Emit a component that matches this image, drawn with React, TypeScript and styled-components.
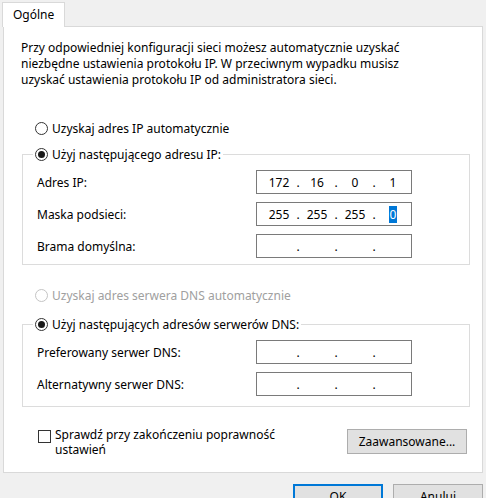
import styled, { createGlobalStyle } from "styled-components";

const GlobalStyle = createGlobalStyle`
  html, body {
    margin: 0;
    padding: 0;
    background: #f0f0f0;
  }
  body {
    font-family: "Noto Sans", "Open Sans", Arial, sans-serif;
    font-size: 12px;
    color: #000;
  }
`;

const Window = styled.div`
  width: 486px;
  height: 498px;
  overflow: hidden;
  background: #f0f0f0;
  padding-top: 2px;
  box-sizing: border-box;
`;

const TabStrip = styled.div`
  display: flex;
  padding-left: 2px;
`;

const Tab = styled.div`
  width: 63px;
  height: 25px;
  box-sizing: border-box;
  padding: 3px 0 0 10px;
  background: #fff;
  border: 1px solid #d9d9d9;
  border-bottom: none;
  position: relative;
  z-index: 1;
  margin-bottom: -1px;
`;

const Panel = styled.div`
  margin: 0 3px;
  height: 447px;
  box-sizing: border-box;
  background: #fff;
  border: 1px solid #d9d9d9;
  padding: 13px 13px 0 17px;
  display: flex;
  flex-direction: column;
`;

const Intro = styled.p`
  margin: 0;
  line-height: 16px;
  width: 420px;
`;

const Indent = styled.div`
  padding-left: 14px;
`;

const RadioRow = styled.label<{ $disabled?: boolean }>`
  display: flex;
  align-items: center;
  gap: 4px;
  height: 16px;
  color: ${(p) => (p.$disabled ? "#a0a0a0" : "#000")};
`;

const RadioCircle = styled.span<{ $checked?: boolean; $disabled?: boolean }>`
  width: 13px;
  height: 13px;
  box-sizing: border-box;
  border-radius: 50%;
  border: 1px solid ${(p) => (p.$disabled ? "#c4c4c4" : "#333")};
  background: #fff;
  display: flex;
  align-items: center;
  justify-content: center;
  &::after {
    content: "";
    display: ${(p) => (p.$checked ? "block" : "none")};
    width: 7px;
    height: 7px;
    border-radius: 50%;
    background: #1a1a1a;
  }
`;

const Group = styled.fieldset<{ $top: number; $bottom: number }>`
  margin: ${(p) => p.$top}px 0 0 1px;
  width: 448px;
  box-sizing: border-box;
  border: 1px solid #dcdcdc;
  padding: 8px 0 ${(p) => p.$bottom}px 14px;
  display: flex;
  flex-direction: column;
  gap: 8px;
`;

const Legend = styled.legend`
  padding: 0 2px;
  margin-left: -4px;
`;

const FieldRow = styled.div`
  display: flex;
  align-items: center;
  height: 24px;
`;

const FieldLabel = styled.span`
  width: 219px;
`;

const IpBox = styled.div`
  display: flex;
  align-items: center;
  width: 156px;
  height: 24px;
  box-sizing: border-box;
  border: 1px solid #7a7a7a;
  background: #fff;
  padding-left: 7px;
`;

const Octet = styled.span`
  width: 30px;
  text-align: center;
`;

const Dot = styled.span`
  width: 8px;
  text-align: center;
`;

const Selected = styled.span`
  background: #0078d7;
  color: #fff;
  padding: 0 1px;
`;

const Spacer = styled.div<{ $h: number }>`
  height: ${(p) => p.$h}px;
  flex-shrink: 0;
`;

const BottomRow = styled.div`
  display: flex;
  align-items: flex-start;
  justify-content: space-between;
  margin-top: 20px;
  padding-left: 17px;
  width: 446px;
  box-sizing: border-box;
`;

const CheckRow = styled.label`
  display: flex;
  align-items: flex-start;
  gap: 4px;
  line-height: 15px;
`;

const CheckBox = styled.span`
  width: 13px;
  height: 13px;
  box-sizing: border-box;
  border: 1px solid #333;
  background: #fff;
  margin-top: 3px;
  flex-shrink: 0;
`;

const Button = styled.button<{ $default?: boolean }>`
  font: inherit;
  color: #000;
  height: 25px;
  box-sizing: border-box;
  background: #e1e1e1;
  border: ${(p) => (p.$default ? "2px solid #0078d7" : "1px solid #adadad")};
  padding: 0;
  flex-shrink: 0;
`;

const AdvancedButton = styled(Button)`
  width: 120px;
  margin-top: 2px;
`;

const Footer = styled.div`
  display: flex;
  justify-content: flex-end;
  gap: 10px;
  padding: 11px 3px 0 0;
`;

const DialogButton = styled(Button)`
  width: 90px;
`;

function IpField({ parts, selectLast }: { parts: string[]; selectLast?: boolean }) {
  return (
    <IpBox>
      {parts.map((p, i) => (
        <span key={i} style={{ display: "contents" }}>
          <Octet>{selectLast && i === 3 ? <Selected>{p}</Selected> : p}</Octet>
          {i < 3 && <Dot>.</Dot>}
        </span>
      ))}
    </IpBox>
  );
}

function Radio({ label, checked, disabled }: { label: string; checked?: boolean; disabled?: boolean }) {
  return (
    <RadioRow $disabled={disabled}>
      <RadioCircle $checked={checked} $disabled={disabled} />
      {label}
    </RadioRow>
  );
}

const empty = ["", "", "", ""];

export default function App() {
  return (
    <>
      <GlobalStyle />
      <Window>
        <TabStrip>
          <Tab>Ogólne</Tab>
        </TabStrip>
        <Panel>
          <Intro>
            Przy odpowiedniej konfiguracji sieci możesz automatycznie uzyskać
            niezbędne ustawienia protokołu IP. W przeciwnym wypadku musisz
            uzyskać ustawienia protokołu IP od administratora sieci.
          </Intro>
          <Spacer $h={32} />
          <Indent>
            <Radio label="Uzyskaj adres IP automatycznie" />
          </Indent>
          <Group $top={10} $bottom={6}>
            <Legend>
              <Radio label="Użyj następującego adresu IP:" checked />
            </Legend>
            <FieldRow>
              <FieldLabel>Adres IP:</FieldLabel>
              <IpField parts={["172", "16", "0", "1"]} />
            </FieldRow>
            <FieldRow>
              <FieldLabel>Maska podsieci:</FieldLabel>
              <IpField parts={["255", "255", "255", "0"]} selectLast />
            </FieldRow>
            <FieldRow>
              <FieldLabel>Brama domyślna:</FieldLabel>
              <IpField parts={empty} />
            </FieldRow>
          </Group>
          <Spacer $h={22} />
          <Indent>
            <Radio label="Uzyskaj adres serwera DNS automatycznie" disabled />
          </Indent>
          <Group $top={13} $bottom={10}>
            <Legend>
              <Radio label="Użyj następujących adresów serwerów DNS:" checked />
            </Legend>
            <FieldRow>
              <FieldLabel>Preferowany serwer DNS:</FieldLabel>
              <IpField parts={empty} />
            </FieldRow>
            <FieldRow>
              <FieldLabel>Alternatywny serwer DNS:</FieldLabel>
              <IpField parts={empty} />
            </FieldRow>
          </Group>
          <BottomRow>
            <CheckRow>
              <CheckBox />
              <span>
                Sprawdź przy zakończeniu poprawność
                <br />
                ustawień
              </span>
            </CheckRow>
            <AdvancedButton>Zaawansowane...</AdvancedButton>
          </BottomRow>
        </Panel>
        <Footer>
          <DialogButton $default>OK</DialogButton>
          <DialogButton>Anuluj</DialogButton>
        </Footer>
      </Window>
    </>
  );
}
